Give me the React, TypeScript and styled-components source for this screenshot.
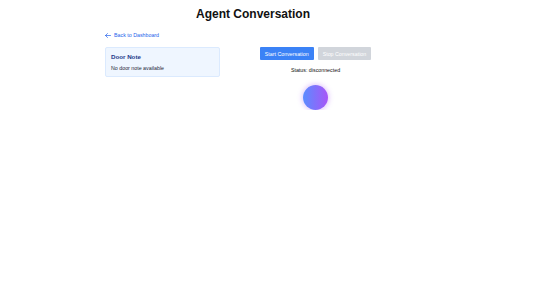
import React from "react";
import styled, { createGlobalStyle } from "styled-components";

const GlobalStyle = createGlobalStyle`
  body {
    margin: 0;
    background: #ffffff;
    font-family: "Liberation Sans", Arial, sans-serif;
    color: #111827;
  }
`;

const Page = styled.div`
  width: 296px;
  margin-left: 105px;
  padding-top: 7px;
`;

const Title = styled.h1`
  margin: 0;
  font-size: 12px;
  line-height: 15px;
  font-weight: 700;
  text-align: center;
  color: #111;
`;

const BackLink = styled.a`
  display: inline-flex;
  align-items: center;
  gap: 3px;
  margin-top: 10px;
  font-size: 5.3px;
  line-height: 7px;
  color: #2563eb;
  text-decoration: none;
  cursor: pointer;
`;

const Columns = styled.div`
  display: grid;
  grid-template-columns: 115px 1fr;
  gap: 10px;
  margin-top: 5px;
  align-items: start;
`;

const NoteCard = styled.div`
  box-sizing: border-box;
  height: 30px;
  padding: 5px 5px;
  background: #eff6ff;
  border: 1px solid #dbeafe;
  border-radius: 2px;
`;

const NoteTitle = styled.div`
  font-size: 6.2px;
  line-height: 8px;
  font-weight: 700;
  color: #1e3a8a;
`;

const NoteText = styled.div`
  margin-top: 4px;
  font-size: 5.3px;
  line-height: 7px;
  color: #1f2937;
`;

const Controls = styled.div`
  display: flex;
  flex-direction: column;
  align-items: center;
`;

const ButtonRow = styled.div`
  display: flex;
  gap: 4px;
`;

const Button = styled.button<{ $disabled?: boolean }>`
  height: 13px;
  padding: 0 5px;
  border: none;
  border-radius: 1px;
  font-family: inherit;
  font-size: 5.3px;
  color: #ffffff;
  background: ${(p) => (p.$disabled ? "#d1d5db" : "#3b82f6")};
  cursor: ${(p) => (p.$disabled ? "not-allowed" : "pointer")};
`;

const Status = styled.div`
  margin-top: 7px;
  font-size: 5.3px;
  line-height: 7px;
  color: #111;
`;

const Orb = styled.div`
  width: 25px;
  height: 25px;
  margin-top: 11px;
  border-radius: 50%;
  background: linear-gradient(90deg, #5b8cff 0%, #a855f7 100%);
  box-shadow: 0 0 5px 1px rgba(168, 85, 247, 0.35);
`;

const ArrowLeft = () => (
  <svg width="6" height="5" viewBox="0 0 12 10" fill="none" stroke="#2563eb" strokeWidth="1.4" strokeLinecap="round" strokeLinejoin="round">
    <path d="M11 5H1M5 1L1 5l4 4" />
  </svg>
);

export default function App() {
  return (
    <>
      <GlobalStyle />
      <Page>
        <Title>Agent Conversation</Title>
        <BackLink>
          <ArrowLeft />
          Back to Dashboard
        </BackLink>
        <Columns>
          <NoteCard>
            <NoteTitle>Door Note</NoteTitle>
            <NoteText>No door note available</NoteText>
          </NoteCard>
          <Controls>
            <ButtonRow>
              <Button>Start Conversation</Button>
              <Button $disabled disabled>
                Stop Conversation
              </Button>
            </ButtonRow>
            <Status>Status: disconnected</Status>
            <Orb />
          </Controls>
        </Columns>
      </Page>
    </>
  );
}
